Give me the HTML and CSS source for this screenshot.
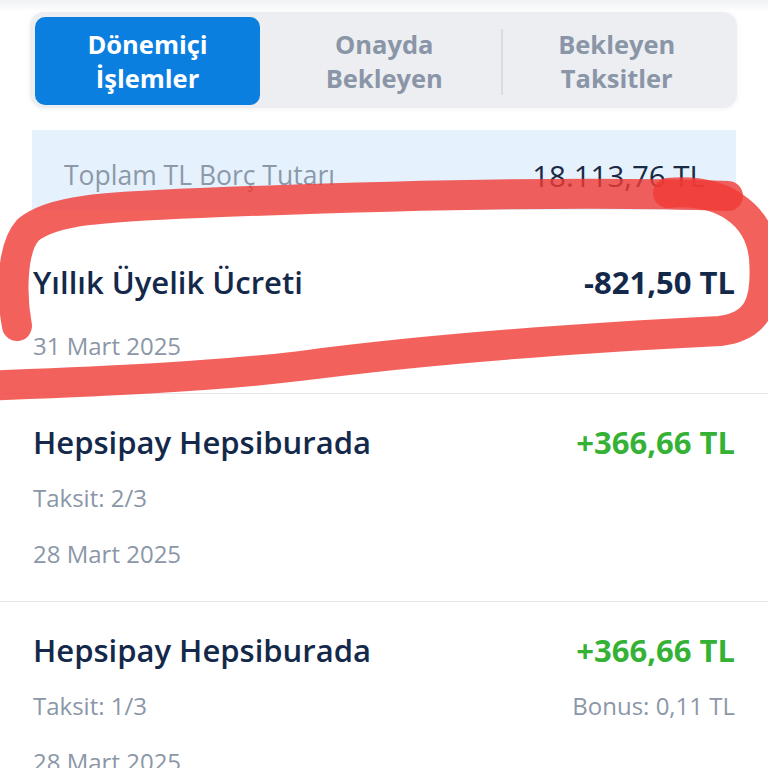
FILE: index.html
```html
<!DOCTYPE html>
<html lang="tr">
<head>
<meta charset="utf-8">
<link rel="stylesheet" href="styles.css">
</head>
<body>
<div class="page">
  <div class="topfade"></div>
  <div class="tabs">
    <div class="tab active">Dönemiçi<br>İşlemler</div>
    <div class="tab">Onayda<br>Bekleyen</div>
    <div class="tab sep">Bekleyen<br>Taksitler</div>
  </div>
  <div class="summary">
    <span class="sum-label">Toplam TL Borç Tutarı</span>
    <span class="sum-value">18.113,76 TL</span>
  </div>
  <div class="row first">
    <div class="line">
      <span class="title">Yıllık Üyelik Ücreti</span>
      <span class="amount neg">-821,50 TL</span>
    </div>
    <div class="meta date">31 Mart 2025</div>
  </div>
  <div class="row">
    <div class="line">
      <span class="title">Hepsipay Hepsiburada</span>
      <span class="amount pos">+366,66 TL</span>
    </div>
    <div class="meta">Taksit: 2/3</div>
    <div class="meta">28 Mart 2025</div>
  </div>
  <div class="row">
    <div class="line">
      <span class="title">Hepsipay Hepsiburada</span>
      <span class="amount pos">+366,66 TL</span>
    </div>
    <div class="meta line"><span>Taksit: 1/3</span><span>Bonus: 0,11 TL</span></div>
    <div class="meta">28 Mart 2025</div>
  </div>
  <svg class="scribble" width="768" height="768" viewBox="0 0 768 768">
    <path d="M 668 193 C 722 188, 760 214, 764 258 C 767 300, 760 326, 720 331 C 600 337, 450 346, 300 366 C 200 378, 80 382, -20 386" />
    <path d="M 728 196 C 600 191, 400 195, 200 203 C 100 207, 52 210, 28 230 C 10 250, 12 300, 17 326" />
  </svg>
</div>
</body>
</html>
```
FILE: styles.css
```css
html, body {
  margin: 0;
  padding: 0;
  background: #ffffff;
}
body {
  font-family: "Open Sans", "Noto Sans", sans-serif;
  color: #14294a;
}
.page {
  width: 768px;
  height: 768px;
  overflow: hidden;
  position: relative;
}
.topfade {
  height: 12px;
  background: linear-gradient(#f1f2f4, #ffffff);
}
.tabs {
  margin: 0 31px 0 30px;
  height: 96px;
  box-sizing: border-box;
  padding: 5px 4px 3px 5px;
  background: #eceef2;
  border-radius: 14px;
  display: flex;
  box-shadow: 0 1px 6px rgba(0, 0, 0, 0.05);
}
.tab {
  flex: 1;
  display: flex;
  align-items: center;
  justify-content: center;
  text-align: center;
  font-size: 25.5px;
  font-weight: 700;
  line-height: 34px;
  color: #8a96a7;
  position: relative;
}
.tab.active {
  flex: 0 0 225px;
  margin-right: 8px;
  background: #0b7fe0;
  color: #ffffff;
  border-radius: 10px;
}
.tab.sep::before {
  content: "";
  position: absolute;
  left: 0;
  top: 12px;
  bottom: 10px;
  width: 2px;
  background: #d8dbe0;
}
.summary {
  margin: 22px 32px 0;
  height: 80px;
  box-sizing: border-box;
  padding: 10px 31px 0 32px;
  background: #e5f1fc;
  display: flex;
  justify-content: space-between;
  align-items: center;
}
.sum-label {
  font-size: 26.5px;
  color: #8c99a9;
}
.sum-value {
  font-size: 29.5px;
  color: #1a2a44;
  font-weight: 500;
}
.row {
  border-top: 1px solid #e6e8eb;
  padding: 28px 33px 31px 33px;
  display: flex;
  flex-direction: column;
}
.row > .meta {
  margin-top: 20px;
}
.row > .meta + .meta {
  margin-top: 24px;
}
.row.first {
  border-top: none;
  padding: 52px 33px 31px 33px;
}
.row.first > .meta {
  margin-top: 28px;
}
.line {
  display: flex;
  justify-content: space-between;
  align-items: baseline;
}
.title {
  font-size: 31px;
  line-height: 40px;
  font-weight: 600;
  color: #14294a;
}
.amount {
  font-size: 31px;
  line-height: 40px;
  font-weight: 700;
}
.amount.neg {
  color: #14294a;
}
.amount.pos {
  color: #35b236;
}
.meta {
  font-size: 24px;
  line-height: 32px;
  color: #8b97a7;
}
.scribble {
  position: absolute;
  left: 0;
  top: 0;
  pointer-events: none;
}
.scribble path {
  fill: none;
  stroke: #f03a34;
  stroke-width: 30;
  stroke-linecap: round;
  stroke-linejoin: round;
  opacity: 0.8;
}
```
